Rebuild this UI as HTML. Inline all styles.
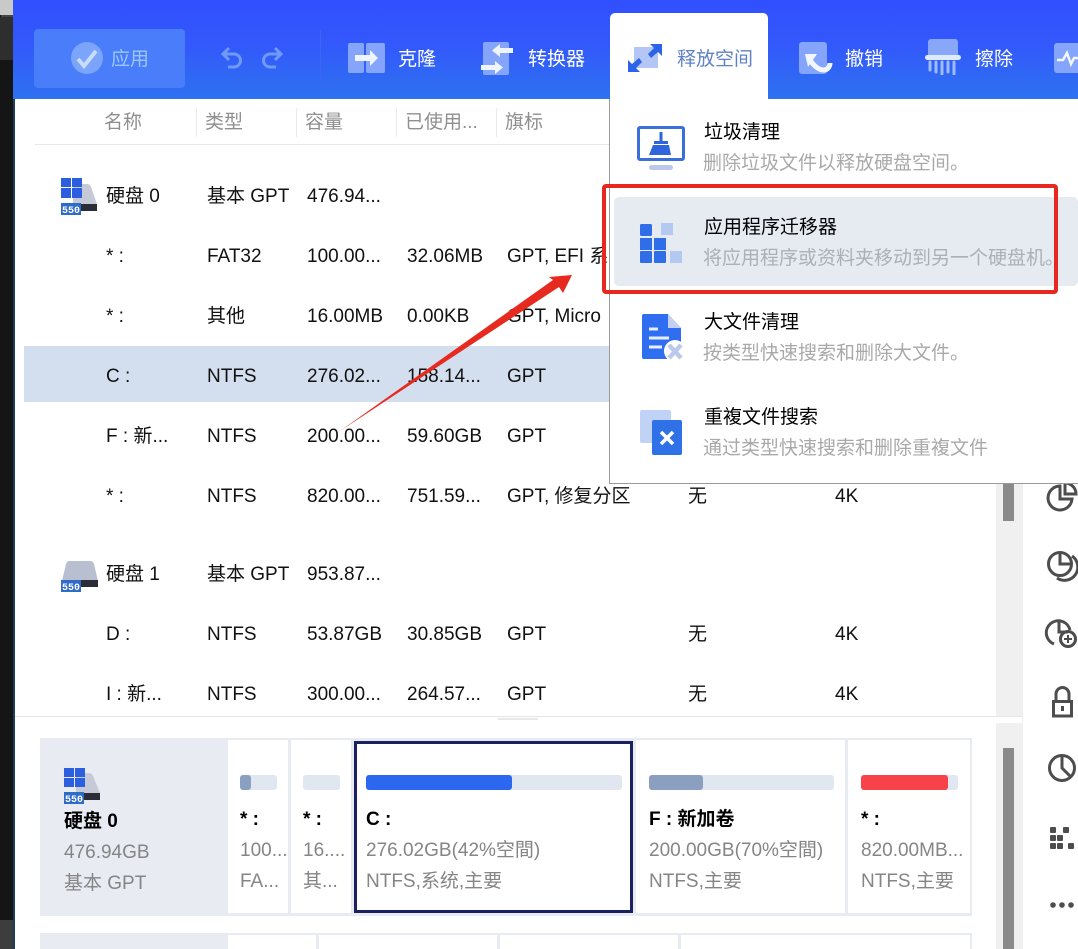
<!DOCTYPE html>
<html lang="zh">
<head>
<meta charset="utf-8">
<title>分区工具</title>
<style>
html,body{margin:0;padding:0;background:#fff}
#p{position:relative;width:1078px;height:949px;overflow:hidden;background:#fff;font-family:"Liberation Sans","Noto Sans CJK SC",sans-serif;font-size:19px;color:#1a1a1a}
#p div,#p span,#p svg{position:absolute}
.t{white-space:nowrap;line-height:24px;height:24px;margin-top:2px}
.h{color:#8f8f8f}
.w{color:#fff}
.g{color:#858585}
.b{font-weight:700;color:#000}
.s{width:1px;top:108px;height:29px;background:#eaeaea}
.d{color:#a9a9a9}
.k{color:#111}
.bar{height:15px;top:775px;background:#e0e7f1;border-radius:3px}
.u{height:15px;top:775px;border-radius:3px}
.c{background:#fff;top:740px;height:173px}
.c2{background:#fff;top:935px;height:14px}
</style>
</head>
<body>
<div id="p">
<!-- left edge -->
<div style="left:0;top:0;width:13px;height:949px;background:#151515"></div>
<div style="left:0;top:0;width:13px;height:15px;background:#c9c9c9"></div>
<div style="left:1px;top:15px;width:12px;height:2px;background:#444"></div>
<div style="left:0;top:17px;width:13px;height:43px;background:#2e2e2e"></div>
<div style="left:0;top:920px;width:13px;height:29px;background:#3d3d3d"></div>
<div style="left:13px;top:99px;width:2px;height:850px;background:#1c3d5e"></div>

<!-- toolbar -->
<div style="left:13px;top:0;width:1065px;height:99px;background:linear-gradient(180deg,#3150ff 0%,#3358fb 45%,#2e72f0 100%)"></div>
<div style="left:34px;top:29px;width:151px;height:59px;background:#4a7df9;border-radius:4px"></div>
<svg style="left:70px;top:41px" width="34" height="34" viewBox="0 0 34 34"><circle cx="17" cy="17" r="16" fill="#7ba4fb"/><path d="M8 18l6 7L26 10" fill="none" stroke="#c9dcfc" stroke-width="4"/></svg>
<span class="t" style="left:111px;top:46px;color:#9cc6fd">应用</span>
<svg style="left:220px;top:46px" width="64" height="24" viewBox="0 0 64 24" fill="none" stroke="#6f9afa" stroke-width="3"><path d="M3 8h11a6 6 0 0 1 0 13H8"/><path d="M9 2L3 8l6 6"/><path d="M61 8H50a6 6 0 0 0 0 13h6"/><path d="M55 2l6 6-6 6"/></svg>
<div style="left:320px;top:30px;width:1px;height:52px;background:#3a66f3"></div>

<svg style="left:348px;top:43px" width="38" height="31" viewBox="0 0 38 31"><rect x="0" y="0" width="16" height="30" rx="2" fill="#84a5fb"/><rect x="18" y="0" width="19" height="30" rx="2" fill="#84a5fb"/><path d="M7 12h15V7l8 8-8 8v-5H7z" fill="#eef5ff"/></svg>
<span class="t w" style="left:398px;top:46px">克隆</span>
<svg style="left:481px;top:41px" width="34" height="36" viewBox="0 0 34 36"><rect x="2" y="1" width="26" height="33" rx="2" fill="#84a5fb"/><path d="M32 7H19V3l-8 6.500 8 6.500v-4h13z" fill="#eef5ff"/><path d="M0 24h14v-4l8 6.500-8 6.500v-4H0z" fill="#eef5ff"/></svg>
<span class="t w" style="left:528px;top:46px">转换器</span>

<svg style="left:799px;top:42px" width="36" height="34" viewBox="0 0 36 34"><rect x="0" y="0" width="28" height="32" rx="3" fill="#84a5fb"/><path d="M6 12h12L9 25z" fill="#f2f7ff"/><path d="M11 18c4 6 9 10 14 10 4 0 6-4 6-7" fill="none" stroke="#f2f7ff" stroke-width="5"/></svg>
<span class="t w" style="left:845px;top:46px">撤销</span>
<svg style="left:925px;top:39px" width="36" height="36" viewBox="0 0 36 36"><path d="M3 3a3 3 0 0 1 3-3h24a3 3 0 0 1 3 3v15H3z" fill="#88a7f8"/><rect x="0" y="16" width="36" height="5" rx="2.500" fill="#dcebfd"/><g stroke="#9fbdfa" stroke-width="3" stroke-linecap="round"><path d="M5 23v8M11 23v10M17 23v12M23 23v10M29 23v12"/></g></svg>
<span class="t w" style="left:975px;top:46px">擦除</span>
<svg style="left:1054px;top:43px" width="24" height="31" viewBox="0 0 24 31"><rect x="0" y="0" width="30" height="30" rx="3" fill="#84a5fb"/><path d="M3 17h6l4-7 4 11 3-6h4" fill="none" stroke="#f2f7ff" stroke-width="2.500"/></svg>

<!-- header row -->
<div style="left:35px;top:144px;width:575px;height:1px;background:#e7e7e7"></div>
<span class="t h" style="left:104px;top:109px">名称</span>
<div class="s" style="left:196px"></div>
<span class="t h" style="left:205px;top:109px">类型</span>
<div class="s" style="left:296px"></div>
<span class="t h" style="left:305px;top:109px">容量</span>
<div class="s" style="left:396px"></div>
<span class="t h" style="left:405px;top:109px">已使用...</span>
<div class="s" style="left:496px"></div>
<span class="t h" style="left:505px;top:109px">旗标</span>

<!-- selected row -->
<div style="left:24px;top:346px;width:586px;height:56px;background:#d3dfee"></div>

<!-- disk icons -->
<svg style="left:61px;top:178px" width="38" height="37" viewBox="0 0 38 37"><path d="M12 6h14q3 0 4 3l6 17v6H12z" fill="#c6cad6"/><g fill="#2c5fe0"><rect x="0" y="0" width="10" height="9"/><rect x="11" y="0" width="10" height="9"/><rect x="0" y="10" width="10" height="10"/><rect x="11" y="10" width="10" height="10"/></g><rect x="19" y="26" width="17" height="7" fill="#2a2d38"/><rect x="0" y="25" width="20" height="12" fill="#2f6cc8"/><text x="10" y="35" text-anchor="middle" font-family="Liberation Mono" font-weight="700" font-size="10" fill="#fff">550</text></svg>
<svg style="left:61px;top:561px" width="38" height="31" viewBox="0 0 38 31"><path d="M1 20L5 3q1-3 3-3h21q3 0 4 3l4 17v6H1z" fill="#b7bfd0"/><rect x="19" y="19" width="18" height="7" fill="#2a2d38"/><rect x="0" y="19" width="20" height="12" fill="#2f6cc8"/><text x="10" y="29" text-anchor="middle" font-family="Liberation Mono" font-weight="700" font-size="10" fill="#fff">550</text></svg>

<!-- rows -->
<span class="t k" style="left:106px;top:183px">硬盘 0</span><span class="t k" style="left:207px;top:183px">基本 GPT</span><span class="t k" style="left:307px;top:183px">476.94...</span>

<span class="t k" style="left:106px;top:243px">* :</span><span class="t k" style="left:207px;top:243px">FAT32</span><span class="t k" style="left:307px;top:243px">100.00...</span><span class="t k" style="left:407px;top:243px">32.06MB</span><span class="t k" style="left:507px;top:243px">GPT, EFI 系统</span>

<span class="t k" style="left:106px;top:303px">* :</span><span class="t k" style="left:207px;top:303px">其他</span><span class="t k" style="left:307px;top:303px">16.00MB</span><span class="t k" style="left:407px;top:303px">0.00KB</span><span class="t k" style="left:507px;top:303px">GPT, Micro</span>

<span class="t k" style="left:106px;top:363px">C :</span><span class="t k" style="left:207px;top:363px">NTFS</span><span class="t k" style="left:307px;top:363px">276.02...</span><span class="t k" style="left:407px;top:363px">158.14...</span><span class="t k" style="left:507px;top:363px">GPT</span>

<span class="t k" style="left:106px;top:423px">F : 新...</span><span class="t k" style="left:207px;top:423px">NTFS</span><span class="t k" style="left:307px;top:423px">200.00...</span><span class="t k" style="left:407px;top:423px">59.60GB</span><span class="t k" style="left:507px;top:423px">GPT</span>

<span class="t k" style="left:106px;top:483px">* :</span><span class="t k" style="left:207px;top:483px">NTFS</span><span class="t k" style="left:307px;top:483px">820.00...</span><span class="t k" style="left:407px;top:483px">751.59...</span><span class="t k" style="left:507px;top:483px">GPT, 修复分区</span><span class="t k" style="left:688px;top:483px">无</span><span class="t k" style="left:835px;top:483px">4K</span>

<span class="t k" style="left:106px;top:561px">硬盘 1</span><span class="t k" style="left:207px;top:561px">基本 GPT</span><span class="t k" style="left:307px;top:561px">953.87...</span>

<span class="t k" style="left:106px;top:621px">D :</span><span class="t k" style="left:207px;top:621px">NTFS</span><span class="t k" style="left:307px;top:621px">53.87GB</span><span class="t k" style="left:407px;top:621px">30.85GB</span><span class="t k" style="left:507px;top:621px">GPT</span><span class="t k" style="left:688px;top:621px">无</span><span class="t k" style="left:835px;top:621px">4K</span>

<span class="t k" style="left:106px;top:681px">I : 新...</span><span class="t k" style="left:207px;top:681px">NTFS</span><span class="t k" style="left:307px;top:681px">300.00...</span><span class="t k" style="left:407px;top:681px">264.57...</span><span class="t k" style="left:507px;top:681px">GPT</span><span class="t k" style="left:688px;top:681px">无</span><span class="t k" style="left:835px;top:681px">4K</span>

<!-- split -->
<div style="left:15px;top:716px;width:1007px;height:1px;background:#e6e6e6"></div>
<div style="left:498px;top:718px;width:40px;height:2px;background:#e8e8e8"></div>

<!-- scrollbars -->
<div style="left:996px;top:99px;width:26px;height:617px;background:#f0f0f0"></div>
<div style="left:996px;top:723px;width:26px;height:226px;background:#f0f0f0"></div>
<div style="left:1003px;top:470px;width:11px;height:51px;background:#8a8a8a"></div>
<div style="left:1003px;top:748px;width:11px;height:201px;background:#8a8a8a"></div>
<div style="left:1022px;top:99px;width:1px;height:850px;background:#eeeeee"></div>

<!-- right icons -->
<svg style="left:1040px;top:480px" width="38" height="440" viewBox="0 0 38 440" fill="none" stroke="#4d4d4d" stroke-width="3">
<path d="M20 6a12 12 0 1 0 12 13H20z"/><path d="M25 3v11h11a11 11 0 0 0-11-11z"/>
<circle cx="20" cy="84" r="11.500"/><path d="M20 72.500V84h11.500"/><path d="M32 76a13 13 0 0 1-15 22"/>
<path d="M14 164a12 12 0 1 1 16-14"/><path d="M19 140v12h9"/><circle cx="28" cy="159" r="7.500"/><path d="M24 159h8M28 155v8" stroke-width="2"/>
<rect x="13.500" y="221.500" width="18" height="14.500"/><path d="M16 221v-7a6.500 6.500 0 0 1 13 0v7"/><rect x="21" y="226" width="3" height="5" fill="#4d4d4d" stroke="none"/>
<circle cx="22" cy="288" r="12.500"/><path d="M22 276v12l9 9"/>
<g fill="#4d4d4d" stroke="none"><rect x="10" y="347" width="6" height="6" rx="1"/><rect x="23" y="347" width="6" height="6" rx="1"/><rect x="10" y="355" width="6" height="6" rx="1"/><rect x="17" y="355" width="6" height="6" rx="1"/><rect x="10" y="363" width="6" height="6" rx="1"/><rect x="17" y="363" width="6" height="6" rx="1"/><rect x="28" y="363" width="6" height="6" rx="1"/><circle cx="13" cy="425" r="2.800"/><circle cx="22" cy="425" r="2.800"/><circle cx="31" cy="425" r="2.800"/></g>
</svg>

<!-- bottom disk map -->
<div style="left:40px;top:738px;width:932px;height:178px;background:#e8ebf1"></div>
<div class="c" style="left:228px;width:60px"></div>
<div class="c" style="left:291px;width:60px"></div>
<div class="c" style="left:636px;width:209px"></div>
<div class="c" style="left:848px;width:122px"></div>
<div class="c" style="left:354px;width:273px;top:741px;height:166px;border:3px solid #1a2060"></div>

<svg style="left:64px;top:768px" width="38" height="36" viewBox="0 0 38 36"><path d="M12 5h13q3 0 4 3l7 17v6H12z" fill="#c6cad6"/><g fill="#2c5fe0"><rect x="0" y="0" width="10" height="9"/><rect x="11" y="0" width="10" height="9"/><rect x="0" y="10" width="10" height="9"/><rect x="11" y="10" width="10" height="9"/></g><rect x="19" y="25" width="17" height="7" fill="#2a2d38"/><rect x="0" y="24" width="20" height="12" fill="#2f6cc8"/><text x="10" y="34" text-anchor="middle" font-family="Liberation Mono" font-weight="700" font-size="10" fill="#fff">550</text></svg>
<span class="t b" style="left:64px;top:808px">硬盘 0</span>
<span class="t g" style="left:64px;top:839px">476.94GB</span>
<span class="t g" style="left:64px;top:870px">基本 GPT</span>

<div class="bar" style="left:240px;width:37px"></div><div class="u" style="left:240px;width:11px;background:#8b9fc0"></div>
<span class="t b" style="left:240px;top:806px">* :</span><span class="t g" style="left:240px;top:837px">100...</span><span class="t g" style="left:240px;top:868px">FA...</span>

<div class="bar" style="left:303px;width:37px"></div>
<span class="t b" style="left:303px;top:806px">* :</span><span class="t g" style="left:303px;top:837px">16....</span><span class="t g" style="left:303px;top:868px">其...</span>

<div class="bar" style="left:366px;width:256px"></div><div class="u" style="left:366px;width:146px;background:#2b68ef"></div>
<span class="t b" style="left:366px;top:806px">C :</span><span class="t g" style="left:366px;top:837px">276.02GB(42%空間)</span><span class="t g" style="left:366px;top:868px">NTFS,系统,主要</span>

<div class="bar" style="left:649px;width:185px"></div><div class="u" style="left:649px;width:54px;background:#8ba0c0"></div>
<span class="t b" style="left:649px;top:806px">F : 新加卷</span><span class="t g" style="left:649px;top:837px">200.00GB(70%空間)</span><span class="t g" style="left:649px;top:868px">NTFS,主要</span>

<div class="bar" style="left:861px;width:97px"></div><div class="u" style="left:861px;width:87px;background:#f8424a"></div>
<span class="t b" style="left:861px;top:806px">* :</span><span class="t g" style="left:861px;top:837px">820.00MB...</span><span class="t g" style="left:861px;top:868px">NTFS,主要</span>

<div style="left:40px;top:933px;width:932px;height:16px;background:#e8ebf1"></div>
<div class="c2" style="left:228px;width:88px"></div>
<div class="c2" style="left:319px;width:178px"></div>
<div class="c2" style="left:500px;width:178px"></div>
<div class="c2" style="left:681px;width:289px"></div>

<!-- arrow -->
<svg style="left:0;top:0" width="1078" height="949" viewBox="0 0 1078 949"><polygon points="340,431 553,280 549,277 572,275 563,293 559,287" fill="#e62a20"/></svg>

<!-- menu -->
<div style="left:610px;top:13px;width:158px;height:90px;background:#fff;border-radius:5px 5px 0 0"></div>
<div style="left:609px;top:99px;width:469px;height:384px;background:#fff;border-left:1px solid #9a9a9a;border-bottom:1px solid #9a9a9a"></div>

<svg style="left:628px;top:44px" width="34" height="29" viewBox="0 0 34 29"><path d="M6 3h24v21H6z" fill="#b4c6f5"/><path d="M22 0h12v12l-4-4-7 6-3-4 6-6z" fill="#2b64e8"/><path d="M0 28V16l4 4 7-6 3 4-6 6 4 4z" fill="#2b64e8"/></svg>
<span class="t" style="left:677px;top:46px;color:#5f82c6">释放空间</span>

<svg style="left:636px;top:125px" width="50" height="46" viewBox="0 0 50 46"><rect x="2.500" y="2.500" width="45" height="32" rx="1.500" fill="#fff" stroke="#3a70d8" stroke-width="3"/><rect x="13" y="40" width="24" height="5" rx="2.500" fill="#bcc7ec"/><path d="M23.500 7h3v9h-3z" fill="#2e64dc"/><path d="M18 16h14v3H18z" fill="#2e64dc"/><path d="M17 20h16l2 10H13z" fill="#2e64dc"/></svg>
<span class="t k" style="left:704px;top:119px;color:#000">垃圾清理</span>
<span class="t d" style="left:703px;top:150px">删除垃圾文件以释放硬盘空间。</span>

<div style="left:614px;top:197px;width:464px;height:89px;background:#e6ebf2;border-radius:5px"></div>
<svg style="left:640px;top:222px" width="44" height="42" viewBox="0 0 44 42"><g fill="#2f6ee8"><rect x="0" y="2" width="12" height="12" rx="1.500"/><rect x="0" y="16" width="12" height="12"/><rect x="14" y="16" width="12" height="12"/><rect x="0" y="29" width="12" height="12" rx="1"/><rect x="14" y="29" width="12" height="12" rx="1"/></g><g fill="#b4c9f2"><rect x="21" y="1" width="12" height="12"/><rect x="30" y="29" width="12" height="12"/></g></svg>
<span class="t" style="left:704px;top:214px;color:#000">应用程序迁移器</span>
<span class="t" style="left:703px;top:245px;color:#abb0b6">将应用程序或资料夹移动到另一个硬盘机。</span>

<svg style="left:641px;top:313px" width="44" height="48" viewBox="0 0 44 48"><path d="M1 3a2 2 0 0 1 2-2h24l13 14v31H3a2 2 0 0 1-2-2z" fill="#2f6ef0"/><path d="M27 1l13 14H27z" fill="#c5d0ee"/><path d="M8 16h9M8 25h20M8 34h13" stroke="#e6efff" stroke-width="3"/><circle cx="34" cy="38" r="11" fill="#fff"/><path d="M28 32l12 13M40 32L28 45" stroke="#bcc9ea" stroke-width="4.500"/></svg>
<span class="t" style="left:704px;top:309px;color:#000">大文件清理</span>
<span class="t d" style="left:703px;top:340px">按类型快速搜索和删除大文件。</span>

<svg style="left:638px;top:409px" width="46" height="47" viewBox="0 0 46 47"><rect x="2" y="1" width="31" height="33" rx="2" fill="#c0d2f6"/><rect x="14" y="11" width="30" height="35" rx="2" fill="#2f72e8"/><path d="M23 23l12 12M35 23L23 35" stroke="#fff" stroke-width="3.500"/></svg>
<span class="t" style="left:704px;top:404px;color:#000">重複文件搜索</span>
<span class="t d" style="left:703px;top:435px">通过类型快速搜索和删除重複文件</span>

<!-- red box -->
<div style="left:602px;top:184px;width:448px;height:102px;border:4px solid #e8281f;border-radius:4px"></div>
</div>
</body>
</html>
